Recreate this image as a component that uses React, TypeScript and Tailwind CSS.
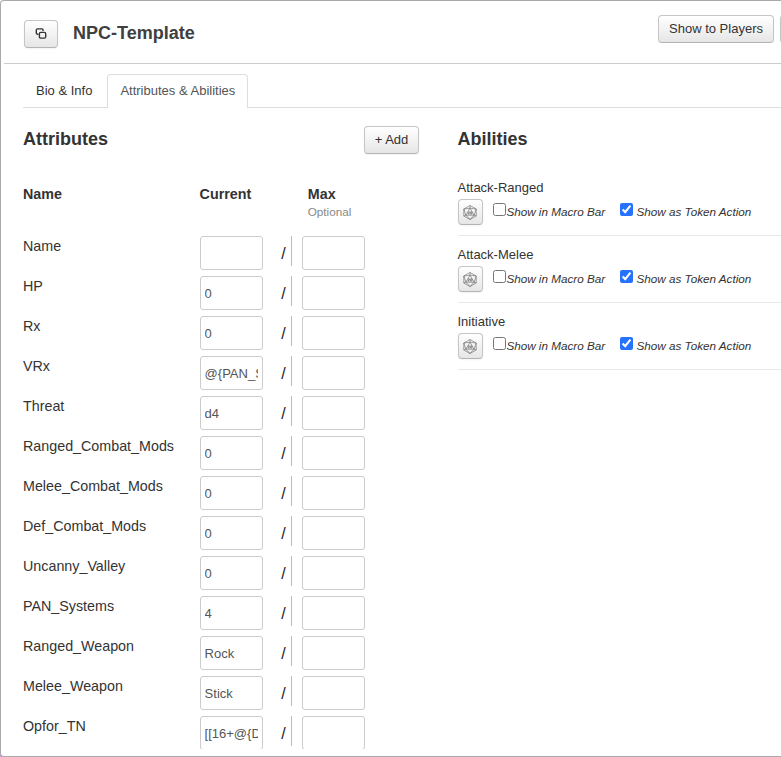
import React from "react";

const attributes: { name: string; current: string }[] = [
  { name: "Name", current: "" },
  { name: "HP", current: "0" },
  { name: "Rx", current: "0" },
  { name: "VRx", current: "@{PAN_Systems}" },
  { name: "Threat", current: "d4" },
  { name: "Ranged_Combat_Mods", current: "0" },
  { name: "Melee_Combat_Mods", current: "0" },
  { name: "Def_Combat_Mods", current: "0" },
  { name: "Uncanny_Valley", current: "0" },
  { name: "PAN_Systems", current: "4" },
  { name: "Ranged_Weapon", current: "Rock" },
  { name: "Melee_Weapon", current: "Stick" },
  { name: "Opfor_TN", current: "[[16+@{Def_Combat_Mods}]]" },
];

const abilities = ["Attack-Ranged", "Attack-Melee", "Initiative"];

const buttonClass =
  "flex shrink-0 items-center justify-center rounded-[4px] border border-[#c5c5c5] border-b-[#b3b3b3] bg-linear-to-b from-white to-[#e6e6e6] text-[13px] leading-[18px] text-[#333] shadow-[0_1px_2px_rgba(0,0,0,0.05)]";

const inputClass =
  "block h-[34px] w-[63px] rounded-[3px] border border-[#ccc] bg-white pl-[3.6px] pr-1 pt-[1px] text-[13px] text-[#555] outline-none";

function PopOutIcon() {
  return (
    <svg width="12" height="12" viewBox="0 0 12 12" fill="none" stroke="#333" strokeWidth="1.4">
      <rect x="4.4" y="4.4" width="6.3" height="5.7" rx="1.3" />
      <path d="M3.4 6.2H2.6A1.3 1.3 0 0 1 1.3 4.9V2.2A1.3 1.3 0 0 1 2.6.9h4.2A1.3 1.3 0 0 1 8.1 2.2v.9" />
    </svg>
  );
}

function DiceIcon() {
  return (
    <svg width="14" height="15" viewBox="0 0 14 15" fill="none" stroke="#666" strokeWidth="0.6" strokeLinejoin="round">
      <path d="M7 .5 13.2 4v7L7 14.5.8 11V4Z" />
      <path d="M7 .5v2.7M.8 4 7 3.2 13.2 4M7 3.2 2.9 10.2h8.2ZM.8 4l2.1 6.2L.8 11M13.2 4l-2.1 6.2 2.1.8M2.9 10.2 7 14.5l4.1-4.3" />
      <path d="M5.2 6.9h1.2v1H5.2v1.2h1.4M7.6 6.9h1.2v2.2H7.6Z" stroke="#555" />
    </svg>
  );
}

function Check({ checked }: { checked: boolean }) {
  return (
    <input type="checkbox" defaultChecked={checked} className="m-0 block size-[13px] shrink-0 accent-[#2672ff]" />
  );
}

function AttributeRow({ name, current }: { name: string; current: string }) {
  return (
    <div className="flex h-10 shrink-0 items-start">
      <div className="w-[177px] text-[14.3px] leading-5 text-[#333]">{name}</div>
      <input className={inputClass} defaultValue={current} />
      <div className="ml-[18px] flex h-[30px] w-[11px] items-center border-r border-[#bbb] pl-[0.3px] pt-[5px] text-[16px] text-[#222]">
        /
      </div>
      <input className={inputClass + " ml-[10px]"} />
    </div>
  );
}

function AbilityRow({ name }: { name: string }) {
  return (
    <div className="mb-[9px] h-[58px] border-b border-[#e8e8e8] text-[#333]">
      <div className="text-[13px] leading-5">{name}</div>
      <div className="mt-[1px] flex items-start">
        <button className={buttonClass + " h-[26px] w-[25px]"}>
          <DiceIcon />
        </button>
        <label className="ml-[10.9px] flex pt-1">
          <Check checked={false} />
          <span className="pt-[1px] text-[11.7px] italic leading-[15px]">Show in Macro Bar</span>
        </label>
        <label className="ml-[14.8px] flex gap-[3.6px] pt-1">
          <Check checked />
          <span className="pt-[1px] text-[11.7px] italic leading-[15px]">Show as Token Action</span>
        </label>
      </div>
    </div>
  );
}

export default function App() {
  return (
    <div className="h-[757px] w-[781px] overflow-hidden bg-linear-to-b from-white from-95% to-[#cf9be6] to-95% font-['Liberation_Sans',Arial,sans-serif]">
      <div className="flex h-full flex-col overflow-hidden rounded-l-[4px] border border-r-0 border-[#aaa] bg-white">
        <header className="ml-[3px] flex h-[63px] shrink-0 items-start border-b border-[#ccc] pl-5">
          <button className={buttonClass + " mt-[19px] h-7 w-[34px]"}>
            <PopOutIcon />
          </button>
          <h1 className="ml-[15px] mt-[20px] text-[18px] font-bold leading-6 text-[#404040]">NPC-Template</h1>
          <div className="ml-auto mt-[14px] flex w-[123px] gap-[6px] overflow-hidden">
            <button className={buttonClass + " h-7 w-[116px]"}>Show to Players</button>
            <button className={buttonClass + " h-7 w-10"} />
          </div>
        </header>

        <nav className="ml-[22px] mt-[10px] flex h-[34px] shrink-0 text-[13px] leading-[18px]">
          <div className="w-[84px] border-b border-[#ddd] pl-[13px] pt-2 text-[#333]">Bio &amp; Info</div>
          <div className="w-[141px] rounded-t-[4px] border border-b-0 border-[#ddd] pl-[12.4px] pt-[7px] text-[#555]">
            Attributes &amp; Abilities
          </div>
          <div className="flex-1 border-b border-[#ddd]" />
        </nav>

        <main className="mb-[7px] ml-[22px] flex min-h-0 flex-1 overflow-hidden">
          <section className="flex w-[396px] shrink-0 flex-col">
            <div className="flex items-start justify-between pt-[18px]">
              <h2 className="text-[18px] font-bold leading-[26px] text-[#333]">Attributes</h2>
              <button className={buttonClass + " h-7 w-[55px]"}>+ Add</button>
            </div>
            <div className="mt-[30px] flex h-[52px] shrink-0 text-[14.3px] font-bold leading-5 text-[#333]">
              <div className="w-[176.6px]">Name</div>
              <div className="w-[108.2px]">Current</div>
              <div>
                Max
                <div className="text-[11.7px] font-normal leading-4 text-[#888]">Optional</div>
              </div>
            </div>
            {attributes.map((a) => (
              <AttributeRow key={a.name} {...a} />
            ))}
          </section>

          <section className="ml-[38.5px] flex-1 pt-[18px]">
            <h2 className="text-[18px] font-bold leading-[26px] text-[#333]">Abilities</h2>
            <div className="mt-[26px]">
              {abilities.map((name) => (
                <AbilityRow key={name} name={name} />
              ))}
            </div>
          </section>
        </main>
      </div>
    </div>
  );
}
